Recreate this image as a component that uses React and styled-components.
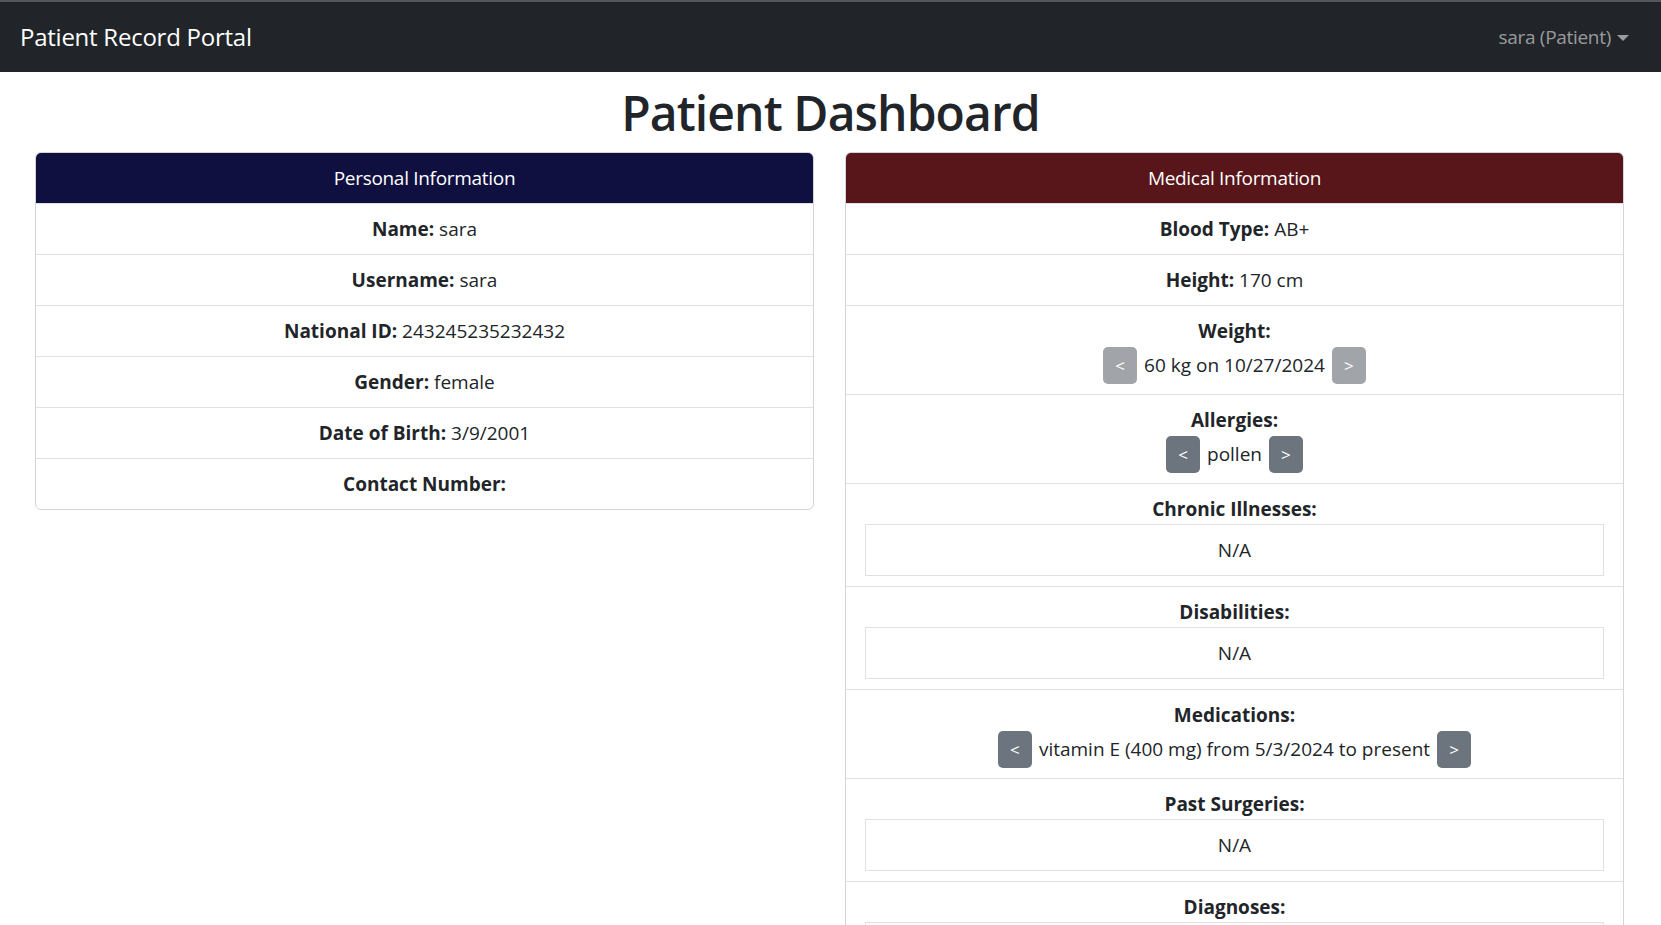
import React from "react";
import styled, { createGlobalStyle } from "styled-components";

const Global = createGlobalStyle`
  html, body { margin: 0; padding: 0; scrollbar-width: none; }
  html::-webkit-scrollbar, body::-webkit-scrollbar { display: none; }
  body {
    font-family: "Open Sans", "Noto Sans", "Liberation Sans", sans-serif;
    color: #212529;
    background: #fff;
    font-size: 20px;
  }
  * { box-sizing: border-box; }
`;

const Navbar = styled.nav`
  height: 72px;
  background: #212529;
  border-top: 2px solid #54575b;
  display: flex;
  align-items: center;
  justify-content: space-between;
  padding: 0 32px 0 20px;
`;

const Brand = styled.a`
  color: #fff;
  font-size: 24px;
  line-height: 36px;
  letter-spacing: -0.25px;
`;

const UserToggle = styled.button`
  background: none;
  border: 0;
  padding: 0;
  font: inherit;
  font-size: 19px;
  letter-spacing: -0.3px;
  color: rgba(255, 255, 255, 0.55);
  display: flex;
  align-items: center;
  gap: 6px;
  &::after {
    content: "";
    border-top: 6px solid rgba(255, 255, 255, 0.55);
    border-left: 6px solid transparent;
    border-right: 6px solid transparent;
    margin-top: 1px;
  }
`;

const Title = styled.h1`
  margin: 11px 0 9px;
  text-align: center;
  font-size: 48px;
  line-height: 60px;
  font-weight: 600;
  letter-spacing: -0.9px;
`;

const Columns = styled.div`
  display: grid;
  grid-template-columns: 1fr 1fr;
  gap: 31px;
  padding: 0 37px 0 35px;
  align-items: start;
`;

const Card = styled.section`
  border: 1px solid #d4d5d9;
  border-radius: 6px;
  overflow: hidden;
  background: #fff;
`;

const CardHeader = styled.div`
  background: ${(p) => p.$bg};
  color: #fff;
  text-align: center;
  padding: 10px;
  line-height: 30px;
  font-size: 19px;
  letter-spacing: -0.3px;
`;

const Row = styled.div`
  border-top: 1px solid #dfe0e4;
  padding: 10px 19px;
  text-align: center;
  line-height: 30px;
  font-size: 19px;
  &:first-of-type { border-top: 0; }
`;

const Label = styled.strong`
  font-weight: 700;
`;

const Line = styled.div`
  line-height: 30px;
`;

const Pager = styled.div`
  display: flex;
  justify-content: center;
  align-items: center;
  gap: 7px;
  height: 38px;
`;

const PageBtn = styled.button`
  width: 34px;
  height: 37px;
  border: 0;
  border-radius: 5px;
  background: ${(p) => (p.disabled ? "#a1a5aa" : "#6c757d")};
  color: #fff;
  font-family: inherit;
  font-size: 17px;
  padding: 0;
  display: flex;
  align-items: center;
  justify-content: center;
`;

const Box = styled.div`
  border: 1px solid #dfe0e4;
  padding: 10px;
  line-height: 30px;
  text-align: center;
`;

function Item({ label, value }) {
  return (
    <Row>
      <Label>{label}:</Label> {value}
    </Row>
  );
}

function PagedItem({ label, value, disabled }) {
  return (
    <Row>
      <Line>
        <Label>{label}:</Label>
      </Line>
      <Pager>
        <PageBtn disabled={disabled}>&lt;</PageBtn>
        <span>{value}</span>
        <PageBtn disabled={disabled}>&gt;</PageBtn>
      </Pager>
    </Row>
  );
}

function BoxItem({ label, value }) {
  return (
    <Row>
      <Line>
        <Label>{label}:</Label>
      </Line>
      <Box>{value}</Box>
    </Row>
  );
}

export default function App() {
  return (
    <>
      <Global />
      <Navbar>
        <Brand>Patient Record Portal</Brand>
        <UserToggle>sara (Patient)</UserToggle>
      </Navbar>
      <Title>Patient Dashboard</Title>
      <Columns>
        <Card>
          <CardHeader $bg="#0f0f40">Personal Information</CardHeader>
          <Item label="Name" value="sara" />
          <Item label="Username" value="sara" />
          <Item label="National ID" value="243245235232432" />
          <Item label="Gender" value="female" />
          <Item label="Date of Birth" value="3/9/2001" />
          <Item label="Contact Number" value="" />
        </Card>
        <Card>
          <CardHeader $bg="#58151a">Medical Information</CardHeader>
          <Item label="Blood Type" value="AB+" />
          <Item label="Height" value="170 cm" />
          <PagedItem label="Weight" value="60 kg on 10/27/2024" disabled />
          <PagedItem label="Allergies" value="pollen" />
          <BoxItem label="Chronic Illnesses" value="N/A" />
          <BoxItem label="Disabilities" value="N/A" />
          <PagedItem label="Medications" value="vitamin E (400 mg) from 5/3/2024 to present" />
          <BoxItem label="Past Surgeries" value="N/A" />
          <BoxItem label="Diagnoses" value="N/A" />
        </Card>
      </Columns>
    </>
  );
}
